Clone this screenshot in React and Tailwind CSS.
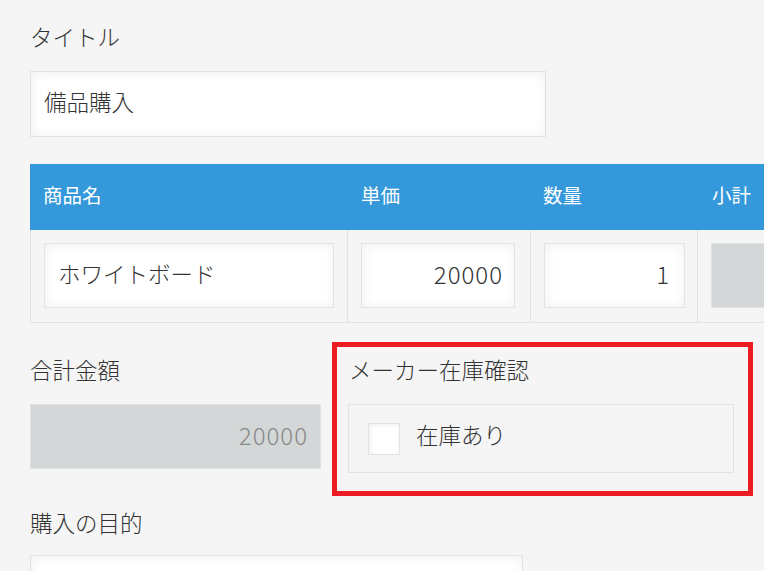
import React from "react";

const font = { fontFamily: '"Noto Sans CJK JP", "Noto Sans", sans-serif' };

const inputBox =
  "bg-white border border-[#e3e3e3] shadow-[inset_1px_1px_12px_#f0f0f0] text-[22.5px] text-[#333] flex items-center pb-[4px]";

const App = () => {
  return (
    <div className="min-h-screen w-screen overflow-hidden bg-[#f5f5f5] pl-[30px] pt-[20px] font-light" style={font}>
      {/* タイトル */}
      <div className="text-[22.5px] leading-[32px] text-[#333]">タイトル</div>
      <div className={`${inputBox} mt-[19px] h-[66px] w-[516px] px-[13px]`}>備品購入</div>

      {/* TABLE */}
      <div className="mt-[27px] w-[900px]">
        <div className="flex h-[66px] bg-[#3498db] text-[19.5px] font-normal text-white">
          <div className="w-[317px] pl-[13px] pb-[4px] flex items-center">商品名</div>
          <div className="w-[183px] pl-[14px] pb-[4px] flex items-center">単価</div>
          <div className="w-[167px] pl-[13px] pb-[4px] flex items-center">数量</div>
          <div className="flex-1 pl-[15px] pb-[4px] flex items-center">小計</div>
        </div>
        <div className="flex border-b border-[#e3e3e3]">
          <div className="w-[317px] border-l border-[#e3e3e3] px-[13px] pt-[13px] pb-[14px]">
            <div className={`${inputBox} h-[65px] w-[290px] px-[13px]`}>ホワイトボード</div>
          </div>
          <div className="w-[183px] border-l border-[#e3e3e3] px-[13px] pt-[13px] pb-[14px]">
            <div className={`${inputBox} h-[65px] w-[154px] pl-[13px] pr-[11px] justify-end text-[24px] tracking-[1px]`}>20000</div>
          </div>
          <div className="w-[167px] border-l border-[#e3e3e3] px-[13px] pt-[13px] pb-[14px]">
            <div className={`${inputBox} h-[65px] w-[141px] px-[15px] justify-end text-[24px]`}>1</div>
          </div>
          <div className="flex-1 border-l border-[#e3e3e3] px-[13px] pt-[13px] pb-[14px]">
            <div className="h-[65px] w-[150px] bg-[#d4d7d7] border border-[#e3e3e3]"></div>
          </div>
        </div>
      </div>

      {/* 合計金額 + メーカー在庫確認 */}
      <div className="mt-[19px] flex items-start">
        <div className="pt-[11px]">
          <div className="text-[22.5px] leading-[32px] text-[#333]">合計金額</div>
          <div className="mt-[19px] h-[65px] w-[291px] bg-[#d4d7d7] border border-[#e3e3e3] pl-[13px] pr-[12px] pb-[4px] flex items-center justify-end text-[24px] text-[#888] tracking-[1px]">
            20000
          </div>
        </div>

        <div className="ml-[11px] border-[5px] border-[#ed1c24] pl-[11px] pr-[14px] pt-[6px] pb-[18px]">
          <div className="text-[22.5px] leading-[32px] text-[#333] pl-[1px]">メーカー在庫確認</div>
          <div className="mt-[19px] h-[69px] w-[386px] border border-[#e3e3e3] flex items-center pl-[19px]">
            <div className="h-[32px] w-[32px] bg-white border border-[#e3e3e3] shadow-[inset_1px_1px_4px_#eeeeee]"></div>
            <span className="ml-[16px] text-[22.5px] text-[#333] pb-[8px]">在庫あり</span>
          </div>
        </div>
      </div>

      {/* 購入の目的 */}
      <div className="mt-[10px] text-[22.5px] leading-[32px] text-[#333]">購入の目的</div>
      <div className={`${inputBox} mt-[17px] h-[120px] w-[493px]`}></div>
    </div>
  );
};

export default App;
